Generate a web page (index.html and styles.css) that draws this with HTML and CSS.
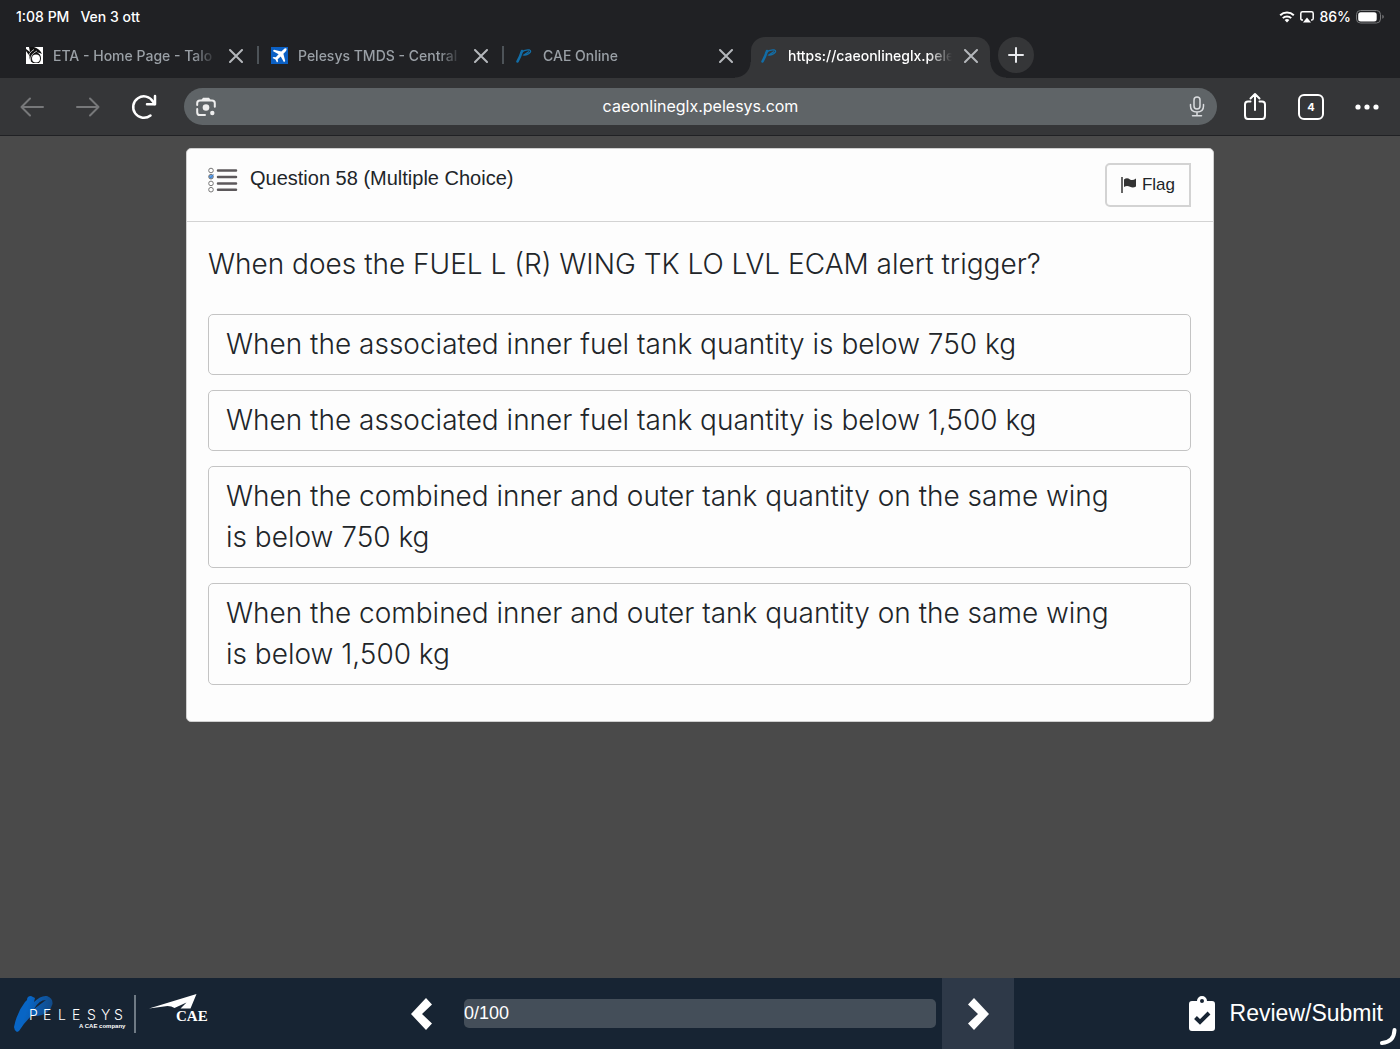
FILE: index.html
```html
<!DOCTYPE html>
<html lang="en">
<head>
<meta charset="utf-8">
<meta name="viewport" content="width=device-width, initial-scale=1">
<title>CAE Online</title>
<link rel="stylesheet" href="styles.css">
</head>
<body>
<header class="browser">
  <div class="status">
    <div class="status-side"><span>1:08 PM</span><span>Ven 3 ott</span></div>
    <div class="status-side status-right">
      <svg width="16" height="12" viewBox="0 0 16 12" aria-hidden="true"><g fill="none" stroke="#fff" stroke-width="2"><path d="M1.2 4.3a9.8 9.8 0 0 1 13.6 0"/><path d="M3.8 7.1a6 6 0 0 1 8.4 0"/></g><path d="M5.6 9.1a3.4 3.4 0 0 1 4.8 0L8 11.6z" fill="#fff"/></svg>
      <svg width="14" height="12" viewBox="0 0 14 12" aria-hidden="true"><path d="M3 9H2.500Q.8 9 .8 7.400V2.400Q.8.8 2.500.8h9q1.700 0 1.700 1.600v5q0 1.600-1.700 1.600H11" fill="none" stroke="#fff" stroke-width="1.500"/><path d="M7 6.500l4 5H3z" fill="#fff"/></svg>
      <span>86%</span>
      <svg width="28" height="14" viewBox="0 0 28 14" aria-hidden="true"><rect x=".5" y=".5" width="24" height="12.500" rx="4" fill="none" stroke="#77787a"/><rect x="2.200" y="2.200" width="18.500" height="9.200" rx="2.500" fill="#fff"/><path d="M26.300 4.800q1.500.6 1.500 2t-1.500 2z" fill="#77787a"/></svg>
    </div>
  </div>

  <nav class="tabs" aria-label="Open tabs">
    <div class="tab">
      <svg class="favicon" viewBox="0 0 17 17" aria-hidden="true"><path fill="#fff" d="M0 0h17v17H0z"/><path d="M3 0h5q6 2 8 7-3-2-5-1.500 4 1.500 4 6 0 3-2 4.500H7Q3 14 3.500 9L0 4V2l4 3z" fill="#111"/><path d="M2 12Q2 6 8 2.500M4.500 14Q4 7 11 4" stroke="#fff" fill="none" stroke-width=".7"/><circle cx="10" cy="11.500" r="4" fill="#fff"/></svg>
      <a class="tab-title" href="#eta">ETA - Home Page - Talo</a>
      <button class="close" aria-label="Close tab"><svg width="14" height="14" viewBox="0 0 14 14"><path d="M1 1l12 12M13 1L1 13"/></svg></button>
    </div>
    <div class="tab">
      <svg class="favicon" viewBox="0 0 17 17" aria-hidden="true"><path fill="#0b60c4" d="M0 0h17v17H0z"/><path d="M15.500 1.500q-1.500-.6-3 .9L10.300 4.600 3 2.800 1.800 4l5.800 3.300-2.800 3-2.300-.3-1 1 3 1.500 1.500 3 1-1-.3-2.300 3-2.800L13 15.200l1.200-1.200-1.800-7.300L14.600 4.500q1.500-1.500.9-3z" fill="#fff"/></svg>
      <a class="tab-title" href="#tmds">Pelesys TMDS - Central</a>
      <button class="close" aria-label="Close tab"><svg width="14" height="14" viewBox="0 0 14 14"><path d="M1 1l12 12M13 1L1 13"/></svg></button>
    </div>
    <div class="tab">
      <svg class="favicon" viewBox="0 0 17 17" aria-hidden="true"><path d="M1.500 14.500Q4.500 9 6 4" stroke="#126da6" stroke-width="2.600" stroke-linecap="round" fill="none"/><path d="M4.500 6Q9 2 13.500 3q2.500 1-.5 3.500Q10.500 8.500 8 8L13 4.500" stroke="#126da6" stroke-width="1.300" fill="none"/></svg>
      <a class="tab-title" href="#cae">CAE Online</a>
      <button class="close" aria-label="Close tab"><svg width="14" height="14" viewBox="0 0 14 14"><path d="M1 1l12 12M13 1L1 13"/></svg></button>
    </div>
    <div class="tab active">
      <svg class="favicon" viewBox="0 0 17 17" aria-hidden="true"><path d="M1.500 14.500Q4.500 9 6 4" stroke="#126da6" stroke-width="2.600" stroke-linecap="round" fill="none"/><path d="M4.500 6Q9 2 13.500 3q2.500 1-.5 3.500Q10.500 8.500 8 8L13 4.500" stroke="#126da6" stroke-width="1.300" fill="none"/></svg>
      <a class="tab-title" href="#exam" aria-current="page">https://caeonlineglx.pele</a>
      <button class="close" aria-label="Close tab"><svg width="14" height="14" viewBox="0 0 14 14"><path d="M1 1l12 12M13 1L1 13"/></svg></button>
    </div>
    <button class="new-tab" aria-label="New tab"><svg width="16" height="16" viewBox="0 0 16 16"><path d="M8 1v14M1 8h14" stroke="#e8eaed" stroke-width="2" stroke-linecap="round"/></svg></button>
  </nav>

  <div class="toolbar">
    <button class="tool" aria-label="Back"><svg width="24" height="20" viewBox="0 0 24 20"><path d="M23 10H1.500M10 1.500L1.500 10l8.500 8.500" fill="none" stroke="#77787a" stroke-width="2" stroke-linecap="round" stroke-linejoin="round"/></svg></button>
    <button class="tool" aria-label="Forward"><svg width="24" height="20" viewBox="0 0 24 20"><path d="M1 10h21.500M14 1.500l8.500 8.500-8.500 8.500" fill="none" stroke="#77787a" stroke-width="2" stroke-linecap="round" stroke-linejoin="round"/></svg></button>
    <button class="tool" aria-label="Reload"><svg width="26" height="26" viewBox="0 0 26 26"><path d="M19.500 21.500A10.700 10.700 0 1 1 22 7.500L23.500 10" fill="none" stroke="#fff" stroke-width="2.500" stroke-linecap="round"/><path d="M24 2v8.200h-8" fill="none" stroke="#fff" stroke-width="2.500" stroke-linecap="round" stroke-linejoin="round"/></svg></button>
    <div class="address">
      <button class="address-btn" aria-label="Search with camera"><svg width="20" height="20" viewBox="0 0 20 20"><path d="M1.200 8V6.200Q1.200 3.500 4 3.500h12q2.800 0 2.800 2.700v3.500M1.200 12v3.200q0 2.900 2.800 2.900h5" fill="none" stroke="#eee" stroke-width="2" stroke-linecap="round"/><path d="M5 3.500L7 .8h6l2 2.700z" fill="#eee"/><circle cx="10" cy="10.500" r="3.300" fill="#eee"/><circle cx="16.300" cy="16" r="2.200" fill="#eee"/></svg></button>
      <input class="url" type="text" aria-label="Address" value="caeonlineglx.pelesys.com">
      <button class="address-btn" aria-label="Voice search"><svg width="16" height="21" viewBox="0 0 16 21"><g fill="none" stroke="#dadcdf" stroke-width="1.500" stroke-linecap="round"><rect x="5" y="1" width="6" height="12" rx="3"/><path d="M1.500 8.500v1.500q0 6 6.500 6t6.500-6V8.500M8 16v3.500M3.500 19.700h9"/></g></svg></button>
    </div>
    <button class="tool" aria-label="Share"><svg width="24" height="29" viewBox="0 0 24 29"><path d="M7.500 9.500H5q-3 0-3 3v11q0 3.500 3 3.500h14q3 0 3-3.500v-11q0-3-3-3h-2.500M12 18V2.500M7.500 6.500L12 2l4.500 4.500" fill="none" stroke="#fff" stroke-width="2" stroke-linecap="round" stroke-linejoin="round"/></svg></button>
    <button class="tool" aria-label="Show tabs"><span class="tab-count">4</span></button>
    <button class="tool" aria-label="More"><svg width="24" height="6" viewBox="0 0 24 6"><g fill="#fff"><circle cx="3" cy="3" r="2.600"/><circle cx="12" cy="3" r="2.600"/><circle cx="21" cy="3" r="2.600"/></g></svg></button>
  </div>
</header>

<main class="stage">
  <section class="card">
    <div class="card-head">
      <svg class="list-icon" width="30" height="26" viewBox="0 0 30 26" aria-hidden="true"><g fill="#fff" stroke="#777" stroke-width="1"><circle cx="3" cy="3.500" r="2.300"/><circle cx="3" cy="9.700" r="2.300" fill="#6aa2e2"/><circle cx="3" cy="16.400" r="2.300"/><circle cx="3" cy="22.700" r="2.300"/></g><path d="M1.500 9.500l1.300 1.300 2.600-3.300" fill="none" stroke="#2f7fdc"/><path d="M10 3.500h18M10 10h18M10 16.500h18M10 22.700h18" stroke="#5c585b" stroke-width="2.500" stroke-linecap="round"/></svg>
      <h1 class="card-title">Question 58 (Multiple Choice)</h1>
      <button class="flag"><svg width="16" height="16" viewBox="0 0 16 16" aria-hidden="true"><path d="M1 0v16" stroke="#333" stroke-width="1.500"/><path d="M3 2.500q3-2.500 6 0 2.500 1.500 6-1v8q-3 2-6 .3-3-1.800-6 .2z" fill="#333"/></svg>Flag</button>
    </div>
    <div class="card-body">
      <p class="question">When does the FUEL L (R) WING TK LO LVL ECAM alert trigger?</p>
      <div class="answers">
        <button class="answer">When the associated inner fuel tank quantity is below 750 kg</button>
        <button class="answer">When the associated inner fuel tank quantity is below 1,500 kg</button>
        <button class="answer">When the combined inner and outer tank quantity on the same wing is below 750 kg</button>
        <button class="answer">When the combined inner and outer tank quantity on the same wing is below 1,500 kg</button>
      </div>
    </div>
  </section>
</main>

<footer class="bottom">
  <svg class="logo" width="200" height="48" viewBox="0 0 200 48" role="img" aria-label="Pelesys, a CAE company">
    <defs><linearGradient id="ink" x1="0" x2="1" y1="0" y2="0.3"><stop offset=".4" stop-color="#0865c5"/><stop offset="1" stop-color="#124985"/></linearGradient></defs>
    <path fill-rule="evenodd" d="M0 37Q3 22 11 12l2-2q0-4 4-4l4 2-1 4Q27 5 33 6q6 2 5.500 8Q36 24 23 26l-5-1Q10 33 5 41l-2 1q-3-2-3-5zM20 19l12-9q-7 0-12 9z" fill="url(#ink)"/>
    <text class="logo-name" y="30" x="15 29 44 58 73 87 100">PELESYS</text>
    <text class="logo-tag" x="65" y="38">A CAE company</text>
    <path d="M121 5v38" stroke="#6f7a85" stroke-width="2"/>
    <path d="M135 18.500L182.500 4l-6 14.500h-10l6-6-12 5.500q-3-2-7-2z" fill="#fff"/>
    <text class="logo-cae" x="162" y="31">CAE</text>
  </svg>
  <div class="pager">
    <button class="page-btn" aria-label="Previous question"><svg width="22" height="32" viewBox="0 0 22 32"><path d="M15 0l6 6.500L11 16l10 9.500-6 6.500L0 16z" fill="#fff"/></svg></button>
    <div class="progress" role="progressbar" aria-valuenow="0" aria-valuemin="0" aria-valuemax="100">0/100</div>
    <button class="page-btn next" aria-label="Next question"><svg width="22" height="32" viewBox="0 0 22 32"><path d="M7 0L1 6.500 11 16 1 25.500 7 32 22 16z" fill="#fff"/></svg></button>
  </div>
  <button class="submit"><svg width="28" height="36" viewBox="0 0 28 36" aria-hidden="true"><path fill-rule="evenodd" d="M4 5h5a5 5 0 0 1 10 0h5q3 0 3 3v24q0 3-3 3H4q-3 0-3-3V8q0-3 3-3zM14 3a2 2 0 1 0 0 4 2 2 0 0 0 0-4z" fill="#fff"/><path d="M7.500 21.500l4.500 4.500 9-9" fill="none" stroke="#172433" stroke-width="4"/></svg>Review/Submit</button>
  <svg class="spinner" width="18" height="18" viewBox="0 0 18 18" aria-hidden="true"><path d="M15.500 2Q15 14 3 15" fill="none" stroke="#fff" stroke-width="4" stroke-linecap="round"/></svg>
</footer>
</body>
</html>
```
FILE: styles.css
```css
* { box-sizing: border-box; }

body {
  margin: 0;
  min-height: 100vh;
  display: flex;
  flex-direction: column;
  background: #4a4a4a;
  font-family: "Inter", "Liberation Sans", sans-serif;
  color: #212529;
}

button {
  margin: 0;
  padding: 0;
  border: 0;
  background: none;
  font: inherit;
  color: inherit;
  cursor: pointer;
}

svg { display: block; flex: none; }

/* Browser chrome */
.browser {
  background: #202124;
  color: #fff;
  border-bottom: 1px solid #202124;
}

.status {
  display: flex;
  justify-content: space-between;
  height: 37px;
  padding: 7px 16px 0;
  font-size: 14px;
  font-weight: 500;
  line-height: 20px;
}

.status-side { display: flex; gap: 11px; height: 20px; align-items: center; }
.status-right { gap: 5px; }

.tabs {
  display: flex;
  height: 41px;
  padding: 0 16px;
}

.tab {
  position: relative;
  flex: 0 1 239px;
  display: flex;
  align-items: center;
  min-width: 0;
  margin-right: 6px;
  padding: 0 12px 4px 10px;
  font-size: 14px;
  font-weight: 500;
  color: #9aa0a6;
}

.tab:nth-child(-n+2)::after {
  content: "";
  position: absolute;
  right: -4px;
  top: 9px;
  width: 2px;
  height: 18px;
  background: #4d5358;
}

.favicon { width: 17px; height: 17px; margin-right: 10px; }

.tab-title {
  flex: 1;
  min-width: 0;
  white-space: nowrap;
  color: inherit;
  text-decoration: none;
  mask-image: linear-gradient(to right, #000 calc(100% - 24px), transparent);
}

.close { margin-left: 12px; }
.close path { stroke: #b4b7bb; stroke-width: 2; stroke-linecap: round; }

.tab.active {
  background: #353638;
  border-radius: 14px 14px 0 0;
  color: #fff;
}

.tab.active::before,
.tab.active::after {
  content: "";
  position: absolute;
  bottom: 0;
  width: 16px;
  height: 16px;
}

.tab.active::before {
  left: -16px;
  background: radial-gradient(circle at 0 0, transparent 15px, #353638 16px);
}

.tab.active::after {
  right: -16px;
  background: radial-gradient(circle at 100% 0, transparent 15px, #353638 16px);
}

.new-tab {
  display: grid;
  place-items: center;
  width: 36px;
  height: 36px;
  margin-left: 2px;
  border-radius: 50%;
  background: #353638;
}

.toolbar {
  display: flex;
  align-items: center;
  height: 57px;
  padding: 0 5px 0 4px;
  background: #353638;
}

.tool {
  display: grid;
  place-items: center;
  flex: none;
  width: 56px;
  height: 48px;
}

.address {
  flex: 1;
  display: flex;
  align-items: center;
  height: 37px;
  margin: 0 10px 0 12px;
  padding: 0 12px;
  border-radius: 19px;
  background: #5f6467;
}

.url {
  flex: 1;
  min-width: 0;
  padding: 0 4px 2px 0;
  border: 0;
  background: none;
  font: inherit;
  font-size: 16px;
  text-align: center;
  color: #fff;
}

.tab-count {
  display: grid;
  place-items: center;
  width: 26px;
  height: 26px;
  border: 2px solid #fff;
  border-radius: 6px;
  font-size: 11px;
  font-weight: 700;
}

/* Question */
.stage { flex: 1; padding: 12px 16px; }

.card {
  max-width: 1028px;
  margin: 0 auto;
  border: 1px solid #cfcfcf;
  border-radius: 5px;
  background: #fdfdfd;
}

.card-head {
  display: flex;
  align-items: flex-start;
  padding: 14px 22px 14px 21px;
  border-bottom: 1px solid #d3d3d3;
}

.list-icon { margin: 4px 12px 0 0; }

.card-title {
  flex: 1;
  margin: 1px 0 0;
  font-family: "Liberation Sans", sans-serif;
  font-size: 20px;
  font-weight: 400;
  line-height: 28px;
}

.flag {
  display: flex;
  align-items: center;
  justify-content: center;
  gap: 5px;
  width: 86px;
  height: 44px;
  border: 2px solid #d3d3d3;
  border-radius: 5px 0 0 5px;
  font-family: "Liberation Sans", sans-serif;
  font-size: 17px;
}

.card-body { padding: 22px 22px 36px 21px; }

.question {
  margin: 0 0 29px;
  font-size: 28px;
  font-weight: 300;
  line-height: 41px;
}

.answers { display: grid; gap: 15px; }

.answer {
  padding: 9px 60px 9px 17px;
  border: 1px solid #c4c4c4;
  border-radius: 5px;
  font-size: 28px;
  font-weight: 300;
  line-height: 41px;
  text-align: left;
}

/* Bottom bar */
.bottom {
  position: relative;
  display: grid;
  grid-template-columns: 1fr minmax(0, 628px) 1fr;
  align-items: center;
  height: 71px;
  background: #172433;
  color: #fff;
  font-family: "Liberation Sans", sans-serif;
}

.logo { margin-left: 14px; }
.logo text { fill: #fff; }
.logo-name { font: 300 14px "Inter", sans-serif; }
.logo-tag { font: 700 6px "Liberation Sans", sans-serif; }
.logo .logo-cae { font: 700 15px "Liberation Serif", serif; }

.pager { display: flex; align-items: center; gap: 6px; }

.page-btn {
  display: grid;
  place-items: center;
  flex: none;
  width: 72px;
  height: 71px;
}

.next { background: #2e3948; }

.progress {
  flex: 1;
  height: 29px;
  border-radius: 5px;
  background: #444e59;
  font-size: 18px;
  line-height: 29px;
}

.submit {
  justify-self: end;
  display: flex;
  align-items: center;
  gap: 14px;
  margin-right: 17px;
  font-size: 23px;
}

.spinner { position: absolute; right: 3px; bottom: 3px; }
```
